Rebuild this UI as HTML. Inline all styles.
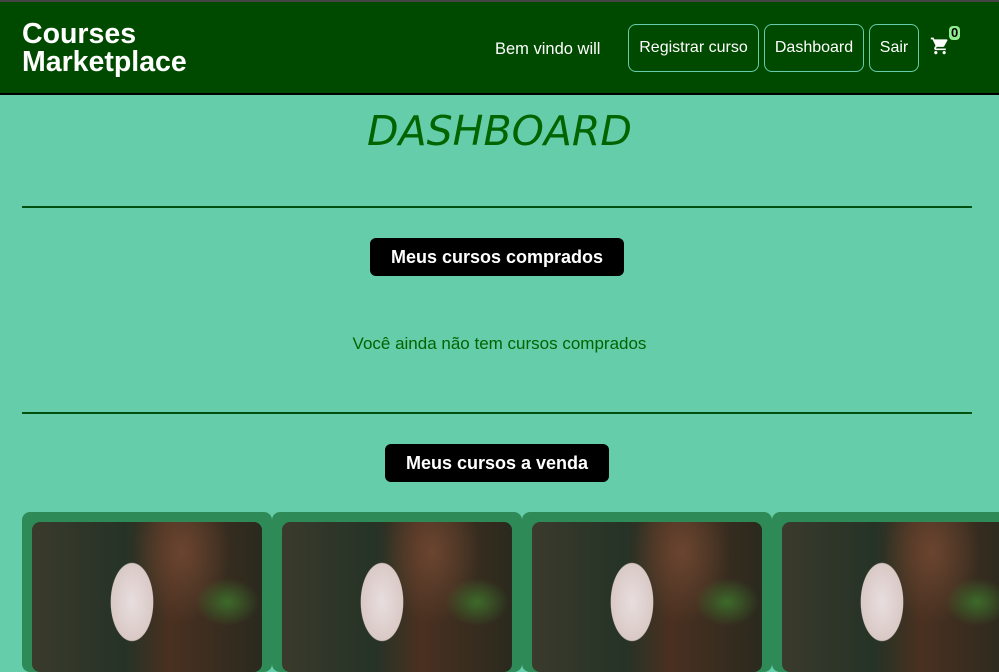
<!DOCTYPE html>
<html><head><meta charset="utf-8"><style>
*{margin:0;padding:0;box-sizing:border-box}
body{width:999px;height:654px;overflow:hidden;background:#66cdaa;font-family:"Liberation Sans",sans-serif;position:relative}
.hdr{position:absolute;left:0;top:0;width:999px;height:95px;background:#004a00;border-top:2px solid #444;border-bottom:2px solid #000}
.logo{position:absolute;left:22px;top:18px;color:#fff;font-weight:bold;font-size:28.5px;line-height:28px}
.bv{position:absolute;left:495px;top:38px;color:#fff;font-size:16.5px}
.nb{position:absolute;top:22px;height:48px;border:1px solid #66cdaa;border-radius:8px;color:#fff;font-size:16px;line-height:46px;text-align:center}
.cart{position:absolute;left:930px;top:34px}
.badge{position:absolute;left:949px;top:24px;background:#90ee90;color:#000;font-weight:bold;font-size:13px;border-radius:4px;padding:0 2px;line-height:14px}
h1{position:absolute;left:0;width:999px;top:107px;text-align:center;font-style:italic;font-weight:normal;font-size:41px;color:#006400;font-family:"DejaVu Sans","Liberation Sans",sans-serif}
.hr{position:absolute;left:22px;width:950px;height:2px;background:#00500f}
.btn{position:absolute;background:#000;color:#fff;font-weight:bold;font-size:18px;border-radius:6px;height:38px;line-height:38px;text-align:center}
.msg{position:absolute;left:0;width:999px;text-align:center;top:334px;color:#006400;font-size:17px}
.card{position:absolute;top:512px;width:250px;height:160px;background:#2e8b57;border-radius:8px}
.img{position:absolute;left:10px;top:10px;width:230px;height:150px;border-radius:8px;overflow:hidden;
background:radial-gradient(ellipse 30px 55px at 100px 80px,#e8dede 0,#d9c9c6 70%,transparent 72%),radial-gradient(ellipse 40px 30px at 195px 80px,#3d6a2a 0,transparent 80%),radial-gradient(ellipse 60px 90px at 150px 30px,#6a4530 0,transparent 80%),linear-gradient(90deg,#3a3a2c,#253326 40%,#4a3020 60%,#2a2a1e)}
</style></head><body>
<div class="hdr">
<div class="logo">Courses<br>Marketplace</div>
<div class="bv">Bem vindo will</div>
<div class="nb" style="left:628px;width:131px">Registrar curso</div>
<div class="nb" style="left:764px;width:100px">Dashboard</div>
<div class="nb" style="left:869px;width:50px">Sair</div>
<svg class="cart" width="20" height="20" viewBox="0 0 24 24"><path fill="#fff" d="M7 18c-1.1 0-2 .9-2 2s.9 2 2 2 2-.9 2-2-.9-2-2-2zM1 2v2h2l3.6 7.6-1.4 2.4c-.1.3-.2.6-.2 1 0 1.1.9 2 2 2h12v-2H7.4c-.1 0-.2-.1-.2-.2v-.1l.9-1.700h7.4c.8 0 1.4-.4 1.7-1l3.6-6.5c.1-.2.2-.3.2-.5 0-.6-.4-1-1-1H5.2l-.9-2H1zm16 16c-1.1 0-2 .9-2 2s.9 2 2 2 2-.9 2-2-.9-2-2-2z"/></svg>
<div class="badge">0</div>
</div>
<h1>DASHBOARD</h1>
<div class="hr" style="top:206px"></div>
<div class="btn" style="left:370px;top:238px;width:254px">Meus cursos comprados</div>
<div class="msg">Você ainda não tem cursos comprados</div>
<div class="hr" style="top:412px"></div>
<div class="btn" style="left:385px;top:444px;width:224px">Meus cursos a venda</div>
<div class="card" style="left:22px"><div class="img"></div></div>
<div class="card" style="left:272px"><div class="img"></div></div>
<div class="card" style="left:522px"><div class="img"></div></div>
<div class="card" style="left:772px"><div class="img"></div></div>
</body></html>
